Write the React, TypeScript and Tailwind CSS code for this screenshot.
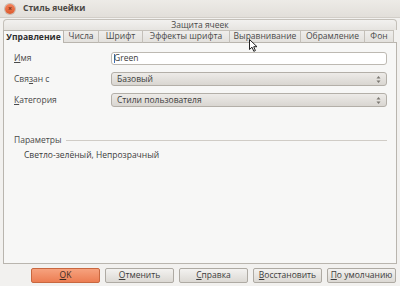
import { ReactNode } from 'react';

// ─── Pieces ───────────────────────────────────────────────────────────────────

const TABS = ['Управление', 'Числа', 'Шрифт', 'Эффекты шрифта', 'Выравнивание', 'Обрамление', 'Фон'];
const TAB_W = ['w-[61px]', 'w-[35px]', 'w-[44px]', 'w-[87px]', 'w-[71px]', 'w-[64px]', 'w-[29px]'];

function Mn({ k, rest }: { k: string; rest: string }) {
  return (
    <span>
      <span className="underline decoration-[0.5px] underline-offset-[1px]">{k}</span>
      {rest}
    </span>
  );
}

function Spin() {
  return (
    <svg width="5" height="9" viewBox="0 0 5 9" className="shrink-0">
      <path d="M2.5 1 L4.5 3.5 L0.5 3.5 Z" fill="#7a7771" />
      <path d="M2.5 8 L4.5 5.5 L0.5 5.5 Z" fill="#7a7771" />
    </svg>
  );
}

function Select({ value }: { value: string }) {
  return (
    <div className="flex h-[14px] w-[276px] items-center justify-between rounded-[3px] border border-[#b3afa8] bg-gradient-to-b from-[#edebe8] to-[#d9d6d1] pl-[5px] pr-[5px] text-[#3c3c3c]">
      <span>{value}</span>
      <Spin />
    </div>
  );
}

function Row({ label, children }: { label: ReactNode; children: ReactNode }) {
  return (
    <div className="flex items-center">
      <div className="w-[97px] text-[#4a4a4a]">{label}</div>
      {children}
    </div>
  );
}

function Btn({ children, primary }: { children: ReactNode; primary?: boolean }) {
  return (
    <div
      className={
        primary
          ? 'flex h-[15px] w-[69px] items-center justify-center rounded-[2px] border border-[#c8673f] bg-gradient-to-b from-[#f6a27e] to-[#ec7d52] text-[#3a2a22]'
          : 'flex h-[15px] w-[69px] items-center justify-center rounded-[2px] border border-[#aeaaa3] bg-gradient-to-b from-[#f3f2f0] to-[#dcd9d4] text-[#3c3c3c]'
      }
    >
      {children}
    </div>
  );
}

// ─────────────────────────────────────────────────────────────────────────────

export default function App() {
  return (
    <div className="relative flex h-[286px] w-[400px] flex-col overflow-hidden bg-[#f2f1ef] font-['Open_Sans','Noto_Sans',sans-serif] text-[8.5px] leading-none text-[#3c3c3c]">
      {/* Title bar */}
      <div className="flex h-[18px] shrink-0 items-center gap-[8px] border-b border-[#d2cec8] bg-gradient-to-b from-[#edebe7] to-[#e2dfda] pl-[5px]">
        <div className="flex h-[10px] w-[10px] items-center justify-center rounded-full bg-gradient-to-b from-[#f3825a] to-[#dc5a2c] shadow-[0_0_0_1px_#c9b9ad]">
          <span className="text-[7px] font-bold leading-none text-[#7a3419]">×</span>
        </div>
        <span className="font-bold text-[#4a4743]">Стиль ячейки</span>
      </div>

      {/* Tab control */}
      <div className="mx-[3px] mt-[1px] flex h-[245px] flex-col">
        <div className="flex h-[11px] items-center justify-center rounded-t-[4px] border border-b-0 border-[#c4c0b9] bg-gradient-to-b from-[#f2f1ef] to-[#e6e4e0] pt-[1px] text-[#4a4a4a]">
          Защита ячеек
        </div>
        <div className="flex h-[13px]">
          {TABS.map((t, i) => (
            <div
              key={t}
              className={
                i === 0
                  ? `${TAB_W[i]} flex items-center justify-center border border-b-0 border-[#b9b5ae] bg-[#f7f7f6] font-bold text-[#2e2e2e]`
                  : `${TAB_W[i]} flex items-center justify-center border-b border-r border-t border-[#c4c0b9] border-b-[#b9b5ae] bg-gradient-to-b from-[#efeeec] to-[#e3e1dd] text-[#4a4a4a]`
              }
            >
              {t}
            </div>
          ))}
          <div className="flex-1 border-b border-[#b9b5ae]" />
        </div>
        <div className="flex flex-1 flex-col border border-t-0 border-[#b9b5ae] bg-[#f7f7f6] pl-[10px] pt-[9px]">
          <div className="flex flex-col gap-[7px]">
            <Row label={<Mn k="И" rest="мя" />}>
              <div className="flex h-[13px] w-[276px] items-center rounded-[3px] border border-[#bdb9b2] bg-white pl-[2px] text-[#3c3c3c]">
                <span className="-mr-[1px] h-[9px] w-[1px] bg-[#3b6fb6]" />
                Green
              </div>
            </Row>
            <Row label={<span>Свя<span className="underline decoration-[0.5px] underline-offset-[1px]">з</span>ан с</span>}>
              <Select value="Базовый" />
            </Row>
            <Row label={<Mn k="К" rest="атегория" />}>
              <Select value="Стили пользователя" />
            </Row>
          </div>

          <div className="mt-[29px] flex items-center gap-[4px] pr-[9px] text-[#4a4a4a]">
            <span>Параметры</span>
            <div className="h-px flex-1 bg-[#d0ccc6]" />
          </div>
          <div className="mt-[6px] pl-[10px] text-[#3c3c3c]">Светло-зелёный, Непрозрачный</div>
        </div>
      </div>

      {/* Buttons */}
      <div className="mt-[4px] flex gap-[5px] pl-[31px]">
        <Btn primary>
          <Mn k="O" rest="K" />
        </Btn>
        <Btn>
          <Mn k="О" rest="тменить" />
        </Btn>
        <Btn>
          <Mn k="С" rest="правка" />
        </Btn>
        <Btn>
          <Mn k="В" rest="осстановить" />
        </Btn>
        <Btn>
          <Mn k="П" rest="о умолчанию" />
        </Btn>
      </div>

      {/* Mouse pointer */}
      <svg className="absolute left-[249px] top-[39px]" width="9" height="13" viewBox="0 0 9 13">
        <path d="M0.5 0.5 L0.5 10.5 L3 8.2 L4.8 12.3 L6.4 11.6 L4.7 7.7 L8 7.7 Z" fill="white" stroke="#222" strokeWidth="1" strokeLinejoin="round" />
      </svg>
    </div>
  );
}
